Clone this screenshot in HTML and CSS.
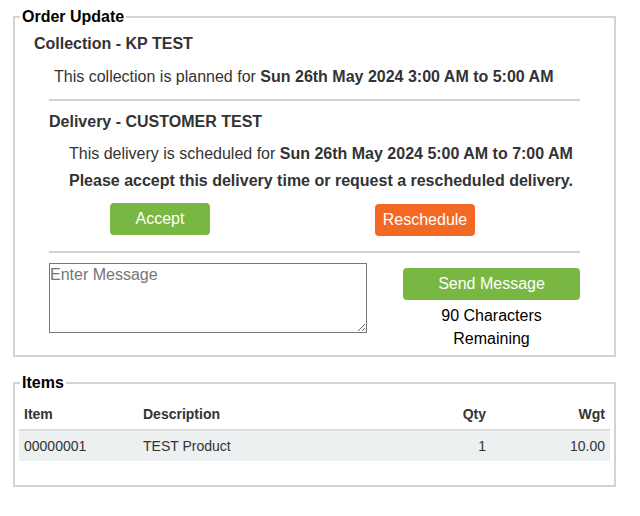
FILE: index.html
```html
<!DOCTYPE html>
<html>
<head>
<meta charset="utf-8">
<link rel="stylesheet" href="styles.css">
</head>
<body>
<fieldset class="box order">
  <legend class="legend">Order Update</legend>
  <div class="collection">
    <h4 class="heading">Collection - KP TEST</h4>
    <p class="info">This collection is planned for <b>Sun 26th May 2024 3:00 AM to 5:00 AM</b></p>
  </div>
  <div class="rule"></div>
  <div class="delivery">
    <h4 class="heading">Delivery - CUSTOMER TEST</h4>
    <p class="info first">This delivery is scheduled for <b>Sun 26th May 2024 5:00 AM to 7:00 AM</b></p>
    <p class="info second"><b>Please accept this delivery time or request a rescheduled delivery.</b></p>
  </div>
  <div class="actions">
    <button class="btn btn-green accept">Accept</button>
    <button class="btn btn-orange resched">Reschedule</button>
  </div>
  <div class="rule rule2"></div>
  <div class="message">
    <textarea class="msg" placeholder="Enter Message"></textarea>
    <div class="send">
      <button class="btn btn-green sendbtn">Send Message</button>
      <div class="remaining">90 Characters<br>Remaining</div>
    </div>
  </div>
</fieldset>
<fieldset class="box items">
  <legend class="legend legend2">Items</legend>
  <table class="tbl">
    <colgroup>
      <col class="c1"><col class="c2"><col class="c3"><col class="c4">
    </colgroup>
    <thead>
      <tr><th>Item</th><th>Description</th><th class="r">Qty</th><th class="r">Wgt</th></tr>
    </thead>
    <tbody>
      <tr><td>00000001</td><td>TEST Product</td><td class="r">1</td><td class="r">10.00</td></tr>
    </tbody>
  </table>
</fieldset>
</body>
</html>
```

FILE: styles.css
```css
html, body {
  background: #fff;
}
body {
  margin: 8px 24px 0 13px;
  font-family: "Liberation Sans", Arial, sans-serif;
  font-size: 16px;
  line-height: 18px;
  color: #333;
}
.box {
  margin: 0;
  border: 2px solid #d3d3d3;
  min-width: 0;
}
.order {
  padding: 0 0 5px 0;
}
.legend {
  padding: 0 2px;
  margin-left: 5px;
  font-weight: bold;
  color: #000;
  line-height: 18px;
}
.heading {
  margin: 0;
  font-size: 16px;
  font-weight: bold;
  line-height: 18px;
}
.info {
  margin: 0;
  padding-left: 20px;
}
.collection {
  padding-left: 19px;
  margin-top: 9px;
}
.collection .info {
  margin-top: 15px;
}
.rule {
  height: 2px;
  background: #d3d3d3;
  margin: 13px 34px 0 34px;
}
.delivery {
  padding-left: 34px;
  margin-top: 12px;
}
.delivery .first {
  margin-top: 14px;
}
.delivery .second {
  margin-top: 9px;
}
.actions {
  display: flex;
  margin-top: 13px;
  padding-left: 95px;
  gap: 165px;
}
.btn {
  border: 0;
  border-radius: 4px;
  color: #fff;
  font-family: "Liberation Sans", Arial, sans-serif;
  font-size: 16px;
  height: 32px;
  padding: 0;
}
.btn-green {
  background: #79b743;
}
.btn-orange {
  background: #f36924;
}
.accept, .resched {
  width: 100px;
}
.resched {
  margin-top: 1px;
}
.rule2 {
  margin-top: 15px;
}
.message {
  display: flex;
  margin-top: 10px;
  padding-left: 34px;
  align-items: flex-start;
}
.msg {
  box-sizing: border-box;
  width: 318px;
  height: 70px;
  border: 1px solid #767676;
  padding: 2px 0;
  font-family: "Liberation Sans", Arial, sans-serif;
  font-size: 16px;
  margin: 0;
}
.msg::placeholder {
  color: #767676;
}
.send {
  margin-left: 36px;
  margin-top: 5px;
  width: 177px;
  display: flex;
  flex-direction: column;
  align-items: center;
}
.sendbtn {
  width: 177px;
}
.remaining {
  margin-top: 4px;
  line-height: 23px;
  color: #000;
  text-align: center;
}
.items {
  margin-top: 17px;
  padding: 7px 4px 24px 4px;
}
.legend2 {
  margin-left: 1px;
}
.tbl {
  width: 100%;
  border-collapse: collapse;
  table-layout: fixed;
  font-size: 14px;
  line-height: 20px;
  color: #333;
}
.c1 { width: 119px; }
.c3 { width: 100px; }
.c4 { width: 119px; }
.tbl th {
  text-align: left;
  padding: 5px;
  border-bottom: 2px solid #ddd;
  font-weight: bold;
}
.tbl td {
  padding: 5px;
  background: #ecf0f1;
}
.tbl .r {
  text-align: right;
}
```
